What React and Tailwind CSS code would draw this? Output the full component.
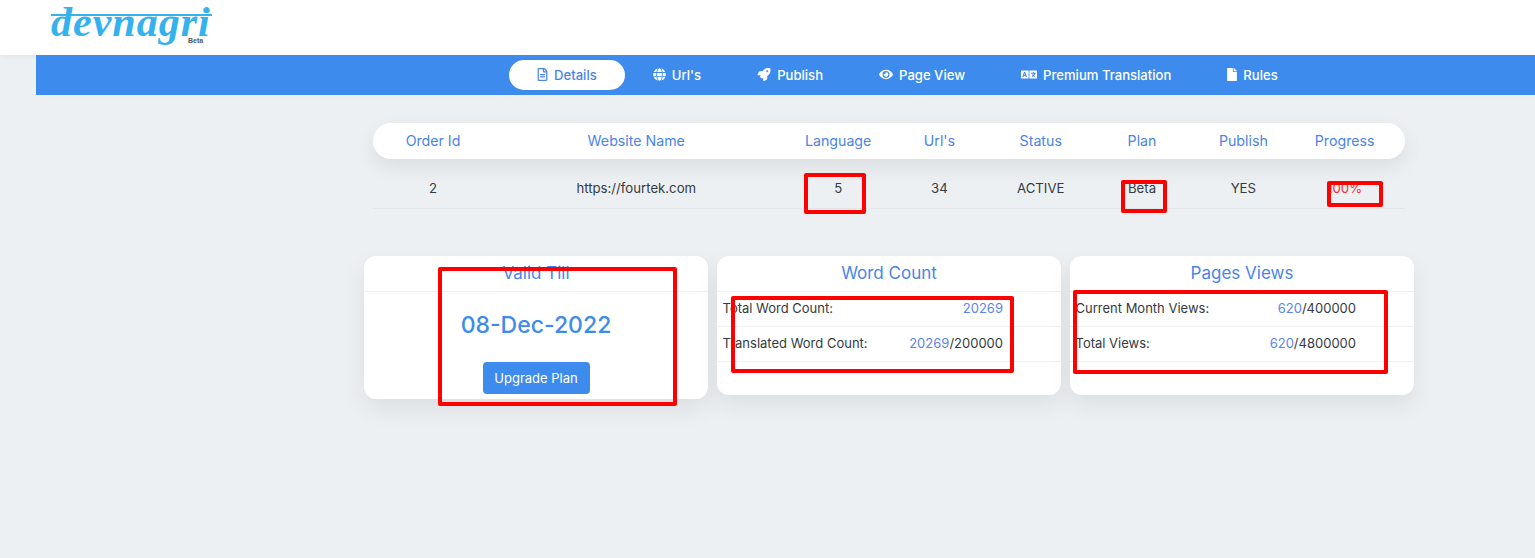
import React from "react";
import { FaRegFileAlt, FaGlobe, FaRocket, FaEye, FaLanguage, FaFile } from "react-icons/fa";

const nav = [
  { label: "Details", Icon: FaRegFileAlt, iconClass: "w-[11px]", active: true },
  { label: "Url's", Icon: FaGlobe, iconClass: "w-[13px]" },
  { label: "Publish", Icon: FaRocket, iconClass: "w-[14px]" },
  { label: "Page View", Icon: FaEye, iconClass: "w-[14px]" },
  { label: "Premium Translation", Icon: FaLanguage, iconClass: "w-[16px]" },
  { label: "Rules", Icon: FaFile, iconClass: "w-[10px]" },
];

const heads = ["Order Id", "Website Name", "Language", "Url's", "Status", "Plan", "Publish", "Progress"];
const cells = ["2", "https://fourtek.com", "5", "34", "ACTIVE", "Beta", "YES", "100%"];
const gridCols = "grid grid-cols-[120px_294.5px_repeat(6,101.3px)] pr-[10px]";

function Logo() {
  return (
    <div className="relative h-[55px] w-[165px] ml-[51px] overflow-hidden">
      <div className="absolute left-0 top-[14px] h-[2px] w-[161px] bg-[#35b2ee]" />
      <span className="absolute left-0 top-[-3px] font-['Liberation_Serif',serif] italic font-bold text-[42px] leading-[50px] tracking-[1px] text-[#35b2ee] whitespace-nowrap">
        devnagri
      </span>
      <span className="absolute left-[137px] top-[37px] font-['Liberation_Sans',sans-serif] font-bold text-[7px] leading-[8px] text-[#4a5568]">
        Beta
      </span>
    </div>
  );
}

function Card({ title, children, className = "" }) {
  return (
    <section className={`w-[344px] rounded-xl bg-white shadow-[0_10px_24px_rgba(0,0,0,0.07)] ${className}`}>
      <h2 className="h-[36px] border-b border-[#eff1f3] text-center text-[17px] leading-[34px] text-[#4a84ea]">{title}</h2>
      {children}
    </section>
  );
}

function Row({ label, value, total }) {
  return (
    <div className="flex h-[35px] items-center justify-between border-b border-[#eff1f3] pl-[5.5px] pr-[58px] text-[13px] text-[#343a40]">
      <span>{label}</span>
      <span>
        <span className="text-[#5c84ea]">{value}</span>
        {total}
      </span>
    </div>
  );
}

function Mark({ className }) {
  return <div className={`absolute rounded-[2px] border-[4px] border-[#ff0000] ${className}`} />;
}

export default function App() {
  return (
    <div className="relative min-h-[558px] overflow-hidden bg-[#ecf0f3] font-['Inter',sans-serif]">
      <header className="flex h-[55px] bg-white shadow-[0_1px_6px_rgba(0,0,0,0.06)]">
        <Logo />
      </header>

      <nav className="ml-[36px] flex h-[40px] items-center bg-[#3d8bec] pl-[473px]">
        {nav.map(({ label, Icon, iconClass, active }) => (
          <a
            key={label}
            className={`flex h-[30px] items-center gap-[6px] rounded-full px-[28px] pt-[1px] text-[13.1px] font-medium ${
              active ? "bg-white text-[#4a84ea]" : "text-white"
            }`}
          >
            <Icon className={`h-[13px] shrink-0 -translate-y-[1px] ${iconClass}`} />
            {label}
          </a>
        ))}
      </nav>

      <main className="ml-[364px] w-[1050px] pt-[28px]">
        <div className="mx-[9px] w-[1032px]">
          <div className={`${gridCols} h-[36px] items-center rounded-full bg-white pb-[1px] text-center text-[14.2px] text-[#4a84ea] shadow-[0_8px_20px_rgba(0,0,0,0.08)]`}>
            {heads.map((h, i) => (
              <div key={h} className={i === 1 ? "pr-2" : ""}>{h}</div>
            ))}
          </div>
          <div className={`${gridCols} h-[50px] items-center border-b border-[#e3e6ea] pt-[10px] text-center text-[13.2px] text-[#343a40]`}>
            {cells.map((c, i) => (
              <div key={c} className={i === 1 ? "pr-2" : i === 7 ? "text-[#f03030]" : ""}>{c}</div>
            ))}
          </div>
        </div>

        <div className="mt-[47px] flex items-start gap-[9px]">
          <Card title="Valid Till" className="h-[143px]">
            <div className="flex flex-col items-center">
              <div className="mt-[17px] text-[23px] font-medium leading-[32px] text-[#3d8bec]">08-Dec-2022</div>
              <button className="mt-[21px] h-[32px] w-[107px] rounded bg-[#3d8bec] pt-[1px] text-[13px] text-white">Upgrade Plan</button>
            </div>
          </Card>
          <Card title="Word Count" className="h-[139px]">
            <Row label="Total Word Count:" value="20269" />
            <Row label="Translated Word Count:" value="20269" total="/200000" />
          </Card>
          <Card title="Pages Views" className="h-[139px]">
            <Row label="Current Month Views:" value="620" total="/400000" />
            <Row label="Total Views:" value="620" total="/4800000" />
          </Card>
        </div>
      </main>

      <Mark className="left-[804px] top-[173px] h-[41px] w-[62px]" />
      <Mark className="left-[1121px] top-[180px] h-[33px] w-[46px]" />
      <Mark className="left-[1327px] top-[181px] h-[26px] w-[56px]" />
      <Mark className="left-[438px] top-[267px] h-[139px] w-[239px]" />
      <Mark className="left-[731px] top-[296px] h-[77px] w-[283px]" />
      <Mark className="left-[1073px] top-[290px] h-[84px] w-[315px]" />
    </div>
  );
}
